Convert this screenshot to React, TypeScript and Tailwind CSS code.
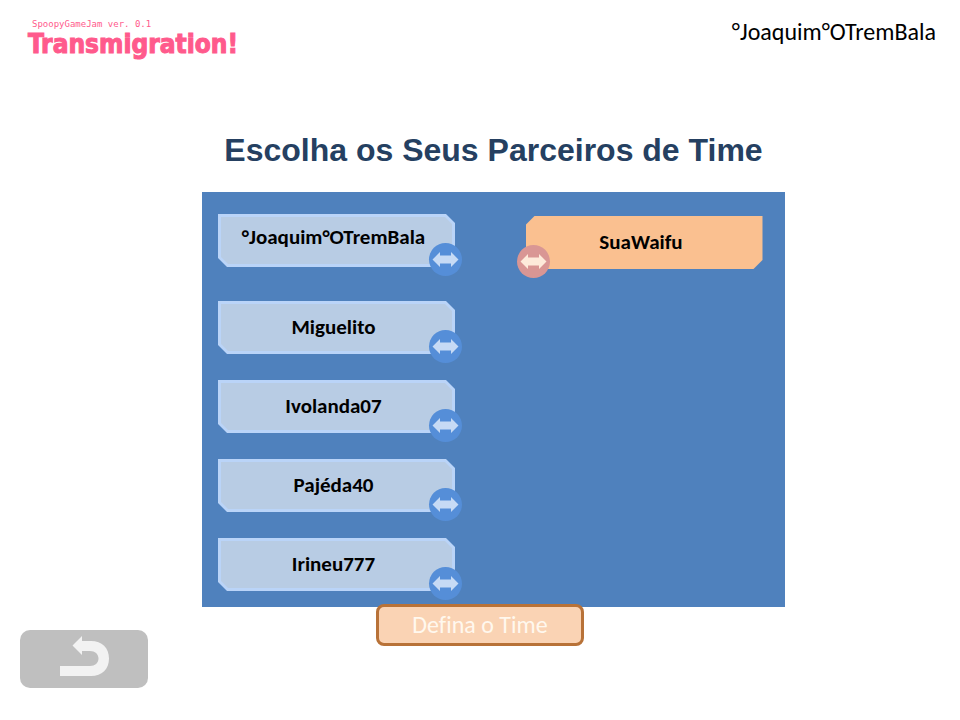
type Side = "left" | "right";

const team = ["°Joaquim°OTremBala", "Miguelito", "Ivolanda07", "Pajéda40", "Irineu777"];

function SwapButton({ name, side }: { name: string; side: Side }) {
  const look =
    side === "left"
      ? "right-[-7px] bg-[#558ed8] text-[#c6daf5]"
      : "left-[-9px] bg-[#d99694] text-[#fdeada]";
  return (
    <button
      type="button"
      aria-label={"Trocar " + name}
      className={"absolute bottom-[-9px] size-[33px] rounded-full " + look}
    >
      <svg viewBox="0 0 33 33" className="size-full" fill="currentColor" aria-hidden="true">
        <path d="M3.500 16.500 11 9v3.500h11V9l7.500 7.500L22 24v-3.500H11V24z" />
      </svg>
    </button>
  );
}

function PlayerCard({ name, side, self = false }: { name: string; side: Side; self?: boolean }) {
  const left = side === "left";
  return (
    <div className="relative h-[53px] w-full max-w-[237px]">
      <div
        className={
          left
            ? "h-full bg-[#bad4f8] p-[3px] [clip-path:polygon(0_0,calc(100%-9px)_0,100%_9px,100%_100%,9px_100%,0_calc(100%-9px))]"
            : "h-full bg-[#fac090] [clip-path:polygon(9px_0,100%_0,100%_calc(100%-9px),calc(100%-9px)_100%,0_100%,0_9px)]"
        }
      >
        <div
          className={
            "flex h-full items-center justify-center pr-1.5 " +
            (self ? "pb-2 " : "pb-0.5 ") +
            (left
              ? "bg-[#b8cce4] [clip-path:polygon(0_0,calc(100%-7px)_0,100%_7px,100%_100%,7px_100%,0_calc(100%-7px))]"
              : "")
          }
        >
          <span className="text-[21px] leading-6 font-bold text-black">{name}</span>
        </div>
      </div>
      <SwapButton name={name} side={side} />
    </div>
  );
}

export default function App() {
  return (
    <div className="min-h-screen bg-white font-['Carlito','Lato',sans-serif] text-black [font-variant-ligatures:none]">
      <header className="flex items-start justify-between pt-[18px] pr-6 pl-7">
        <div className="text-[#ff5a8c]">
          <p className="pl-1 font-['DejaVu_Sans_Mono',monospace] text-[9px] leading-3">
            SpoopyGameJam ver. 0.1
          </p>
          <p className="font-['DejaVu_Sans_Condensed','DejaVu_Sans',sans-serif] text-[26px] leading-[28px] font-bold [-webkit-text-stroke:1px_#ff5a8c]">
            Transmigration!
          </p>
        </div>
        <p className="text-[24px] leading-7">°Joaquim°OTremBala</p>
      </header>

      <main className="mt-[72px]">
        <div className="mx-auto w-full max-w-[610px] pl-[27px]">
          <h1 className="text-center font-['Liberation_Sans',sans-serif] text-[32px] leading-10 font-bold text-[#254061]">
            Escolha os Seus Parceiros de Time
          </h1>
          <div className="mt-[22px] grid grid-cols-2 items-start gap-x-16 bg-[#4f81bd] px-4 pt-[22px] pb-4">
            <ul className="flex flex-col gap-[26px]">
              {team.map((name, i) => (
                <li key={name} className="first:mb-2">
                  <PlayerCard name={name} side="left" self={i === 0} />
                </li>
              ))}
            </ul>
            <div className="pt-0.5">
              <PlayerCard name="SuaWaifu" side="right" />
            </div>
          </div>
        </div>

        <div className="relative -mt-[3px] grid grid-cols-3 px-5">
          <button
            type="button"
            aria-label="Voltar"
            className="mt-[26px] flex h-[58px] w-32 items-start justify-center rounded-[10px] bg-[#bfbfbf] pt-1.5 text-[#f2f2f2]"
          >
            <svg viewBox="0 0 49 40" className="h-10 w-[49px]" fill="currentColor" aria-hidden="true">
              <path d="M0 30v10h31C42 40 49 33 49 22.500S42 5 31 5h-9V0l-9.500 9.500L22 19v-4h8c5 0 8.500 3 8.500 7.500S35 30 30 30z" />
            </svg>
          </button>
          <button
            type="button"
            className="h-[42px] w-52 justify-self-center rounded-lg border-[3px] border-[#b87238] bg-[#fad3b4] text-[24px] leading-7 text-[#fff8ee]"
          >
            Defina o Time
          </button>
        </div>
      </main>
    </div>
  );
}
